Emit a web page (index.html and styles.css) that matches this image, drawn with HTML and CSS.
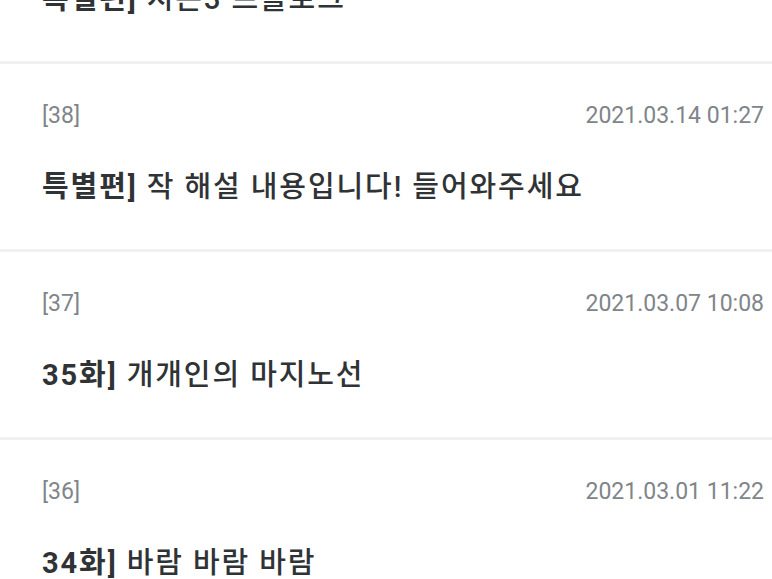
FILE: index.html
```html
<!DOCTYPE html>
<html lang="ko">
<head>
    <meta charset="UTF-8">
    <meta name="viewport" content="width=device-width, initial-scale=1.0">
    <title>Episode List</title>
    <link rel="stylesheet" href="styles.css">
</head>
<body>
    <ul class="post-list">
        <li class="post">
            <div class="post-meta">
                <span class="post-no">[39]</span>
                <span class="post-date">2021.03.21 00:00</span>
            </div>
            <h3 class="post-title"><b>특별편]</b> 시즌3 프롤로그</h3>
        </li>
        <li class="post">
            <div class="post-meta">
                <span class="post-no">[38]</span>
                <span class="post-date">2021.03.14 01:27</span>
            </div>
            <h3 class="post-title"><b>특별편]</b> 작 해설 내용입니다! 들어와주세요</h3>
        </li>
        <li class="post">
            <div class="post-meta">
                <span class="post-no">[37]</span>
                <span class="post-date">2021.03.07 10:08</span>
            </div>
            <h3 class="post-title"><b>35화]</b> 개개인의 마지노선</h3>
        </li>
        <li class="post">
            <div class="post-meta">
                <span class="post-no">[36]</span>
                <span class="post-date">2021.03.01 11:22</span>
            </div>
            <h3 class="post-title"><b>34화]</b> 바람 바람 바람</h3>
        </li>
    </ul>
</body>
</html>
```

FILE: styles.css
```css
body {
    font-family: Roboto, "Noto Sans CJK KR", sans-serif;
    margin: 0;
    padding: 0;
    background-color: #fff;
    overflow: hidden;
}

/* list is scrolled: first item is cut off at the top */
.post-list {
    list-style: none;
    margin: -124px 0 0;
    padding: 0;
}

.post {
    padding: 39px 8px 42px 42px;
    border-bottom: 3px solid #f1f1f1;
}

.post-meta {
    display: flex;
    justify-content: space-between;
    font-size: 23px;
    line-height: 26px;
    color: #80858a;
}

.post-title {
    margin: 38px 0 0;
    font-size: 29px;
    line-height: 40px;
    letter-spacing: 1.9px;
    font-weight: 500;
    color: #303336;
}

.post-title b {
    font-weight: 700;
}
```
